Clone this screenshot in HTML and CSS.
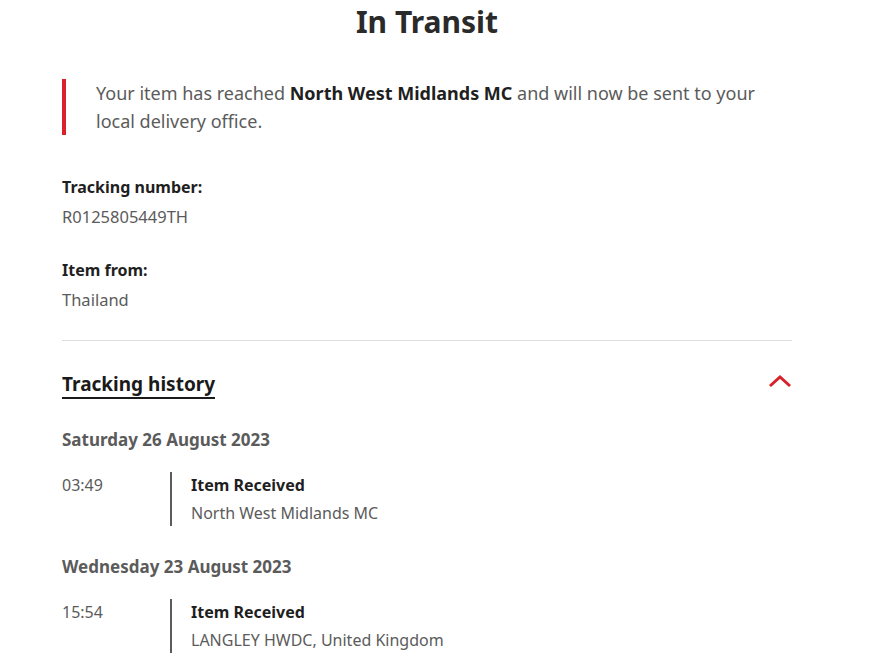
FILE: index.html
```html
<!DOCTYPE html>
<html lang="en">
<head>
    <meta charset="UTF-8">
    <meta name="viewport" content="width=device-width, initial-scale=1.0">
    <title>Track your item</title>
    <link rel="stylesheet" href="styles.css">
</head>
<body>

    <div class="container">
        <h1 class="status">In Transit</h1>

        <div class="callout">
            <p>Your item has reached <strong>North West Midlands MC</strong> and will now be sent to your local delivery office.</p>
        </div>

        <dl class="details">
            <dt>Tracking number:</dt>
            <dd>R0125805449TH</dd>
            <dt>Item from:</dt>
            <dd>Thailand</dd>
        </dl>

        <div class="history">
            <div class="history-head">
                <h2>Tracking history</h2>
                <svg class="chevron" width="24" height="14" viewBox="0 0 24 14">
                    <path d="M2 12 L12 3 L22 12" fill="none" stroke="#da202a" stroke-width="3"/>
                </svg>
            </div>

            <div class="day">
                <h3>Saturday 26 August 2023</h3>
                <div class="event">
                    <span class="time">03:49</span>
                    <div class="info">
                        <strong>Item Received</strong>
                        <span>North West Midlands MC</span>
                    </div>
                </div>
            </div>

            <div class="day">
                <h3>Wednesday 23 August 2023</h3>
                <div class="event">
                    <span class="time">15:54</span>
                    <div class="info">
                        <strong>Item Received</strong>
                        <span>LANGLEY HWDC, United Kingdom</span>
                    </div>
                </div>
            </div>
        </div>
    </div>

</body>
</html>
```

FILE: styles.css
```css
* {
    margin: 0;
    padding: 0;
    box-sizing: border-box;
}

body {
    font-family: "Noto Sans", "Open Sans", Arial, sans-serif;
    background: #fff;
    color: #5b5b5b;
}

.container {
    width: 730px;
    margin-left: 62px;
}

.status {
    text-align: center;
    font-size: 30px;
    font-weight: 700;
    color: #2a2a2a;
    line-height: 42px;
    margin-top: 1px;
}

.callout {
    margin-top: 36px;
    border-left: 4px solid #da202a;
    padding-left: 30px;
    padding-right: 20px;
}

.callout p {
    font-size: 18px;
    line-height: 28px;
}

.callout strong {
    color: #1f1f1f;
}

.details {
    margin-top: 38px;
}

.details dt {
    font-size: 16px;
    font-weight: 700;
    color: #1f1f1f;
    line-height: 29px;
}

.details dd {
    font-size: 16.5px;
    line-height: 29px;
    margin-bottom: 25px;
}

.details dd:last-child {
    margin-bottom: 26px;
}

.history {
    border-top: 1px solid #dedede;
    padding-top: 30px;
}

.history-head {
    display: flex;
    justify-content: space-between;
    align-items: center;
}

.history-head h2 {
    font-size: 19px;
    font-weight: 700;
    color: #1a1a1a;
    border-bottom: 2px solid #1a1a1a;
    line-height: 26px;
}

.chevron {
    margin-bottom: 8px;
}

.day h3 {
    font-size: 17px;
    font-weight: 700;
    color: #5b5b5b;
    margin-top: 28px;
    line-height: 26px;
}

.event {
    display: flex;
    margin-top: 19px;
}

.time {
    width: 108px;
    font-size: 16px;
    line-height: 26px;
}

.info {
    border-left: 2px solid #5b5b5b;
    padding-left: 19px;
    display: flex;
    flex-direction: column;
    gap: 2px;
    font-size: 16px;
    line-height: 26px;
}

.info strong {
    color: #1f1f1f;
}
```
